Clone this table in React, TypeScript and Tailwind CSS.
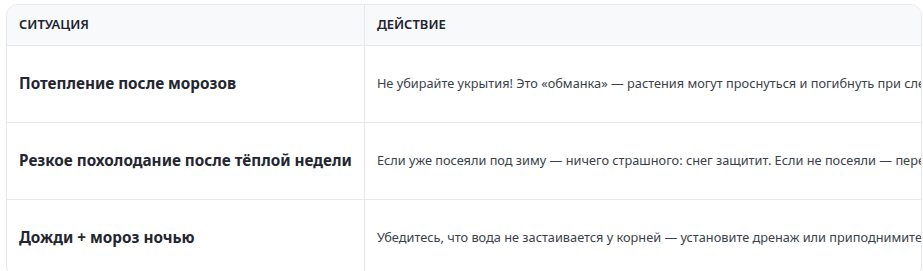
import React from "react";

const rows = [
  {
    s: "Потепление после морозов",
    a: "Не убирайте укрытия! Это «обманка» — растения могут проснуться и погибнуть при следующем похолодании.",
  },
  {
    s: "Резкое похолодание после тёплой недели",
    a: "Если уже посеяли под зиму — ничего страшного: снег защитит. Если не посеяли — перенесите посев на весну.",
  },
  {
    s: "Дожди + мороз ночью",
    a: "Убедитесь, что вода не застаивается у корней — установите дренаж или приподнимите грядки.",
  },
];

export default function App() {
  return (
    <div
      className="bg-white w-[923px] h-[271px] overflow-hidden pt-[4px] pl-[6px]"
      style={{ fontFamily: '"Noto Sans", "Open Sans", sans-serif' }}
    >
      <div className="w-[916px] rounded-[12px] border border-[#e6e8ee] overflow-hidden bg-white shadow-[0_1px_3px_rgba(0,0,0,0.04)]">
        <table className="border-collapse whitespace-nowrap">
          <thead>
            <tr className="bg-[#f8f9fb] h-[40px] border-b border-[#e6e8ee]">
              <th className="w-[357px] min-w-[357px] px-3 text-left text-[13px] font-semibold text-[#1f2430] border-r border-[#e6e8ee]">
                СИТУАЦИЯ
              </th>
              <th className="px-3 text-left text-[13px] font-semibold text-[#1f2430]">
                ДЕЙСТВИЕ
              </th>
            </tr>
          </thead>
          <tbody>
            {rows.map((r, i) => (
              <tr key={i} className="h-[77px] border-b border-[#e6e8ee]">
                <td className="px-3 text-[15.3px] font-bold text-[#23262f] border-r border-[#e6e8ee]">
                  {r.s}
                </td>
                <td className="px-3 text-[12.75px] text-[#3a3f4a]">{r.a}</td>
              </tr>
            ))}
          </tbody>
        </table>
      </div>
    </div>
  );
}
